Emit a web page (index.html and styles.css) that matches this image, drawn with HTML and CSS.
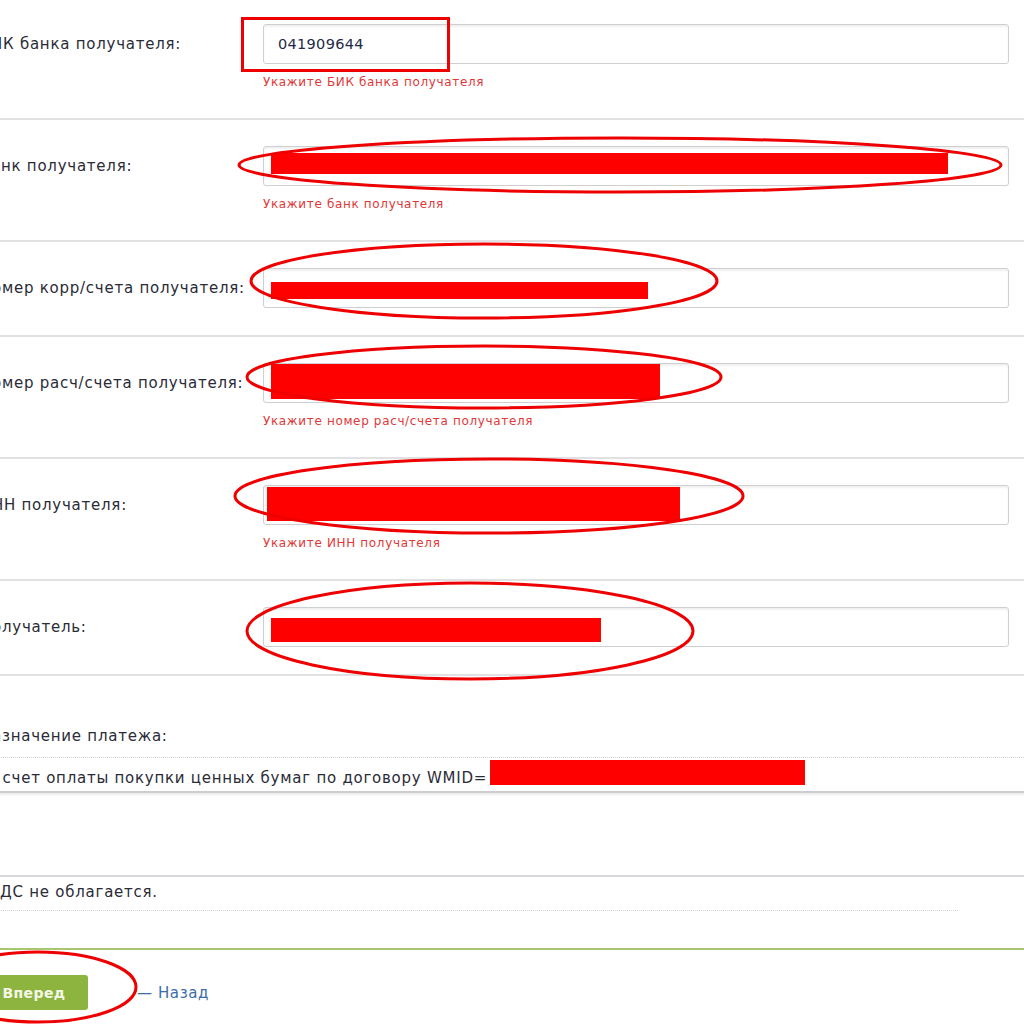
FILE: index.html
```html
<!DOCTYPE html>
<html lang="ru">
<head>
<meta charset="utf-8">
<title>Платеж</title>
<link rel="stylesheet" href="styles.css">
</head>
<body>
<div class="page">
  <div class="form">
    <div class="row">
      <div class="label">БИК банка получателя:</div>
      <div class="field">
        <div class="input">041909644</div>
        <div class="error">Укажите БИК банка получателя</div>
      </div>
    </div>
    <div class="row">
      <div class="label">Банк получателя:</div>
      <div class="field">
        <div class="input"></div>
        <div class="error">Укажите банк получателя</div>
      </div>
    </div>
    <div class="row">
      <div class="label">Номер корр/счета получателя:</div>
      <div class="field">
        <div class="input"></div>
      </div>
    </div>
    <div class="row">
      <div class="label">Номер расч/счета получателя:</div>
      <div class="field">
        <div class="input"></div>
        <div class="error">Укажите номер расч/счета получателя</div>
      </div>
    </div>
    <div class="row">
      <div class="label">ИНН получателя:</div>
      <div class="field">
        <div class="input"></div>
        <div class="error">Укажите ИНН получателя</div>
      </div>
    </div>
    <div class="row">
      <div class="label">Получатель:</div>
      <div class="field">
        <div class="input"></div>
      </div>
    </div>

    <div class="purpose">
      <div class="purpose-title">Назначение платежа:</div>
      <div class="purpose-box">В счет оплаты покупки ценных бумаг по договору WMID=</div>
    </div>

    <div class="nds">
      <div class="nds-text">НДС не облагается.</div>
    </div>

    <div class="footer">
      <button class="btn" type="button">Вперед</button>
      <a class="back" href="#">— Назад</a>
    </div>
  </div>

  <svg class="marks" width="1024" height="1024" viewBox="0 0 1024 1024" xmlns="http://www.w3.org/2000/svg">
    <g fill="#ff0000">
      <rect x="271" y="153" width="677" height="21"/>
      <rect x="271" y="282" width="377" height="17"/>
      <rect x="271" y="364" width="389" height="35"/>
      <rect x="267" y="487" width="413" height="34"/>
      <rect x="271" y="618" width="330" height="24"/>
      <rect x="490" y="760" width="315" height="25"/>
    </g>
    <g fill="none" stroke="#ee0000" stroke-width="3">
      <rect x="242.5" y="18.5" width="206" height="52"/>
      <ellipse cx="620" cy="165" rx="381" ry="27"/>
      <ellipse cx="484" cy="281" rx="233" ry="37"/>
      <ellipse cx="484" cy="377" rx="237" ry="31"/>
      <ellipse cx="489" cy="496" rx="254" ry="37"/>
      <ellipse cx="470" cy="631" rx="223" ry="48"/>
      <ellipse cx="38" cy="987" rx="98" ry="35"/>
    </g>
  </svg>
</div>
</body>
</html>
```

FILE: styles.css
```css
html, body {
  margin: 0;
  padding: 0;
  background: #ffffff;
}

body {
  width: 1024px;
  height: 1024px;
  overflow: hidden;
  font-family: "DejaVu Sans", Verdana, sans-serif;
  color: #2a2b36;
}

.page {
  position: relative;
  width: 1024px;
  height: 1024px;
  overflow: hidden;
}

.form {
  margin-left: -20px;
  margin-top: -2px;
  width: 1100px;
}

.row {
  display: grid;
  grid-template-columns: 283px 746px;
  padding: 26px 0 27px;
  border-bottom: 2px solid #e1e1e4;
}

.row:has(.error) {
  padding-bottom: 29px;
}

.label {
  font-size: 15px;
  line-height: 40px;
  letter-spacing: 0.75px;
  white-space: nowrap;
}

.field {
  display: flex;
  flex-direction: column;
}

.input {
  box-sizing: border-box;
  height: 40px;
  border: 1px solid #cfcfd2;
  border-radius: 3px;
  box-shadow: inset 0 2px 2px rgba(0, 0, 0, 0.06);
  background: #ffffff;
  padding: 0 14px;
  font-size: 14.5px;
  line-height: 38px;
  color: #1f2a48;
  letter-spacing: 0.3px;
}

.error {
  margin-top: 11px;
  font-size: 12px;
  line-height: 14px;
  color: #e03838;
  letter-spacing: 0.65px;
}

.purpose {
  padding-top: 50px;
}

.purpose-title {
  font-size: 15px;
  line-height: 20px;
  letter-spacing: 0.75px;
  margin-bottom: 11px;
}

.purpose-box {
  border-top: 1px dotted #cfcfd6;
  border-bottom: 2px solid #cdcdd0;
  box-shadow: 0 2px 2px rgba(0, 0, 0, 0.08);
  padding: 10px 0 3px 6px;
  font-size: 15px;
  line-height: 20px;
  letter-spacing: 0.75px;
  white-space: nowrap;
}

.nds {
  margin-top: 82px;
  border-top: 2px solid #d8d8dc;
  width: 1100px;
}

.nds-text {
  width: 970px;
  padding: 5px 0 8px 8px;
  font-size: 15px;
  line-height: 20px;
  letter-spacing: 0.75px;
  border-bottom: 1px dotted #d4d4da;
}

.footer {
  margin-top: 37px;
  border-top: 2px solid #a9c56f;
  padding-top: 25px;
  display: flex;
  align-items: center;
  gap: 49px;
}

.btn {
  width: 108px;
  height: 35px;
  border: none;
  border-radius: 3px;
  background: #8db43f;
  color: #f4f7e8;
  font-family: "DejaVu Sans", Verdana, sans-serif;
  font-weight: bold;
  font-size: 14px;
  letter-spacing: 0.4px;
  padding: 0;
  text-align: center;
}

.back {
  font-size: 15px;
  color: #3d6ea8;
  text-decoration: none;
  letter-spacing: 0.6px;
}

.marks {
  position: absolute;
  left: 0;
  top: 0;
  pointer-events: none;
}
```
